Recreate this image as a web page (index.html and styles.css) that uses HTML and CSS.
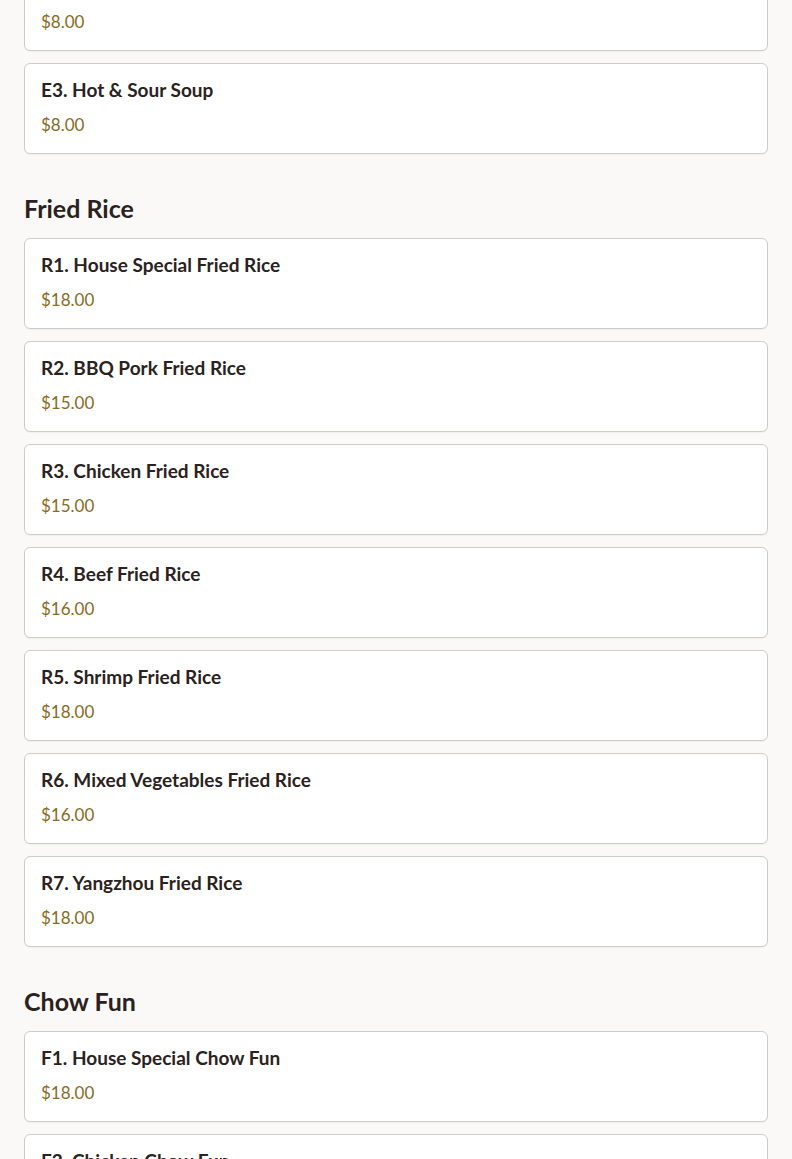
FILE: index.html
```html
<!DOCTYPE html>
<html lang="en">
<head>
<meta charset="utf-8">
<title>Menu</title>
<link rel="stylesheet" href="styles.css">
</head>
<body>
<main class="menu">
  <section class="section section-first">
    <div class="items">
      <div class="item"><div class="item-name">E2. Egg Drop Soup</div><div class="item-price">$8.00</div></div>
      <div class="item"><div class="item-name">E3. Hot &amp; Sour Soup</div><div class="item-price">$8.00</div></div>
    </div>
  </section>
  <section class="section">
    <h2 class="section-title">Fried Rice</h2>
    <div class="items">
      <div class="item"><div class="item-name">R1. House Special Fried Rice</div><div class="item-price">$18.00</div></div>
      <div class="item"><div class="item-name">R2. BBQ Pork Fried Rice</div><div class="item-price">$15.00</div></div>
      <div class="item"><div class="item-name">R3. Chicken Fried Rice</div><div class="item-price">$15.00</div></div>
      <div class="item"><div class="item-name">R4. Beef Fried Rice</div><div class="item-price">$16.00</div></div>
      <div class="item"><div class="item-name">R5. Shrimp Fried Rice</div><div class="item-price">$18.00</div></div>
      <div class="item"><div class="item-name">R6. Mixed Vegetables Fried Rice</div><div class="item-price">$16.00</div></div>
      <div class="item"><div class="item-name">R7. Yangzhou Fried Rice</div><div class="item-price">$18.00</div></div>
    </div>
  </section>
  <section class="section">
    <h2 class="section-title">Chow Fun</h2>
    <div class="items">
      <div class="item"><div class="item-name">F1. House Special Chow Fun</div><div class="item-price">$18.00</div></div>
      <div class="item"><div class="item-name">F2. Chicken Chow Fun</div><div class="item-price">$15.00</div></div>
    </div>
  </section>
</main>
</body>
</html>
```

FILE: styles.css
```css
html, body {
  margin: 0;
  padding: 0;
  background: #faf9f7;
}
body {
  font-family: "Lato", "Noto Sans", sans-serif;
  color: #2a2220;
}
.menu {
  padding: 0 24px 40px;
  margin-top: -40px;
  display: flex;
  flex-direction: column;
  gap: 38px;
}
.section {
  display: flex;
  flex-direction: column;
}
.section-title {
  margin: 0 0 14px;
  font-size: 25px;
  line-height: 32px;
  font-weight: 700;
  color: #2a2220;
}
.items {
  display: flex;
  flex-direction: column;
  gap: 12px;
}
.item {
  background: #ffffff;
  border: 1px solid #cfccc8;
  border-radius: 6px;
  padding: 14px 16px 16px;
  display: flex;
  flex-direction: column;
  gap: 11px;
  box-shadow: 0 1px 1px rgba(0,0,0,0.04);
}
.item-name {
  font-size: 19px;
  line-height: 24px;
  font-weight: 700;
  color: #2a2220;
}
.item-price {
  font-size: 17px;
  line-height: 24px;
  color: #8a6a24;
}
```
